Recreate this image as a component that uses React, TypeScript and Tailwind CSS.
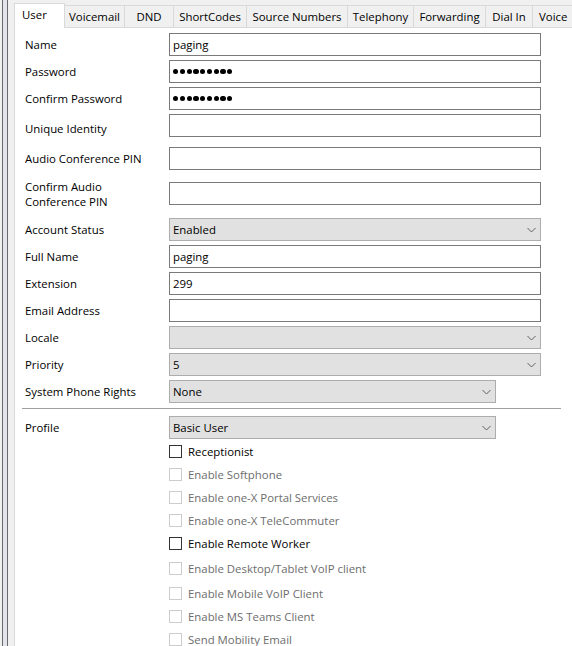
import React from "react";

const font = { fontFamily: '"Open Sans", "Liberation Sans", sans-serif' };

function Chevron() {
  return (
    <svg width="9" height="6" viewBox="0 0 9 6" className="shrink-0">
      <path d="M0.5 1 L4.5 5 L8.5 1" fill="none" stroke="#606060" strokeWidth="1" />
    </svg>
  );
}

function TextBox({ value, password }: { value?: string; password?: boolean }) {
  return (
    <div className="w-[372px] h-[23px] border border-[#7a7a7a] bg-white flex items-center pl-[3px] text-black">
      {password ? (
        <span className="flex gap-[1.6px]">
          {Array.from({ length: 9 }).map((_, i) => (
            <span key={i} className="block w-[5.2px] h-[5.2px] rounded-full bg-black" />
          ))}
        </span>
      ) : (
        <span className="leading-[15px]">{value}</span>
      )}
    </div>
  );
}

function Select({ value, narrow }: { value?: string; narrow?: boolean }) {
  return (
    <div
      className={`${narrow ? "w-[327px]" : "w-[372px]"} h-[23px] border border-[#adadad] bg-[#e1e1e1] flex items-center justify-between pl-[3px] pr-[4px] text-black`}
    >
      <span className="leading-[15px]">{value}</span>
      <Chevron />
    </div>
  );
}

function Row({
  label,
  children,
  mt,
  labelMt = "mt-[4px]",
}: {
  label: string;
  children: React.ReactNode;
  mt: string;
  labelMt?: string;
}) {
  return (
    <div className={`flex items-start ${mt}`}>
      <div className={`w-[144px] shrink-0 leading-[15px] ${labelMt}`}>{label}</div>
      {children}
    </div>
  );
}

function Check({ label, enabled, mt }: { label: string; enabled?: boolean; mt: string }) {
  return (
    <div className={`flex items-center h-[13px] ml-[144px] ${mt}`}>
      <div
        className={`w-[13px] h-[13px] shrink-0 bg-white border ${enabled ? "border-[#333333]" : "border-[#cccccc]"}`}
      />
      <span className={`ml-[6px] leading-[15px] whitespace-nowrap ${enabled ? "text-black" : "text-[#6d6d6d]"}`}>
        {label}
      </span>
    </div>
  );
}

const tabs = [
  { name: "Voicemail", w: "w-[60px]" },
  { name: "DND", w: "w-[49px]" },
  { name: "ShortCodes", w: "w-[73px]" },
  { name: "Source Numbers", w: "w-[101px]" },
  { name: "Telephony", w: "w-[66px]" },
  { name: "Forwarding", w: "w-[72px]" },
  { name: "Dial In", w: "w-[47px]" },
];

export default function App() {
  return (
    <div
      className="w-[572px] h-[646px] overflow-hidden bg-[#f0f0f0] flex text-[11.4px] text-black"
      style={font}
    >
      <div className="w-[2px] shrink-0 bg-[#f0f0f0]" />
      <div className="w-px shrink-0 bg-[#6b6b6b]" />
      <div className="w-[4px] shrink-0 bg-[#e3e3ee]" />
      <div className="w-px shrink-0 bg-[#6b6b6b]" />
      <div className="w-[6px] shrink-0 bg-[#f0f0f0]" />
      <div className="flex-1 flex flex-col min-w-0">
        {/* tab strip */}
        <div className="h-[27px] shrink-0 flex items-end relative z-10">
          <div className="w-[51px] h-[25px] -mb-px bg-white border-l border-t border-r border-[#d9d9d9] pl-[7px] pt-[3px] leading-[15px] shrink-0">
            User
          </div>
          {tabs.map((t) => (
            <div
              key={t.name}
              className={`${t.w} h-[22px] shrink-0 border-t border-r border-[#d9d9d9] bg-[#f0f0f0] flex items-center justify-center leading-[15px] whitespace-nowrap`}
            >
              {t.name}
            </div>
          ))}
          <div className="flex-1 h-[22px] border-t border-[#d9d9d9] bg-[#f0f0f0] flex items-center pl-[6px] leading-[15px] whitespace-nowrap">
            Voice
          </div>
        </div>
        {/* panel */}
        <div className="flex-1 bg-white border-l border-t border-[#d9d9d9] pl-[10px]">
          <Row label="Name" mt="mt-[5px]">
            <TextBox value="paging" />
          </Row>
          <Row label="Password" mt="mt-[4px]">
            <TextBox password />
          </Row>
          <Row label="Confirm Password" mt="mt-[4px]">
            <TextBox password />
          </Row>
          <Row label="Unique Identity" mt="mt-[4px]" labelMt="mt-[7px]">
            <TextBox />
          </Row>
          <Row label="Audio Conference PIN" mt="mt-[10px]" labelMt="mt-[4px]">
            <TextBox />
          </Row>
          <div className="flex items-start mt-[9px]">
            <div className="w-[144px] shrink-0 leading-[15px]">
              Confirm Audio
              <br />
              Conference PIN
            </div>
            <div className="mt-[3px]">
              <TextBox />
            </div>
          </div>
          <Row label="Account Status" mt="mt-[9px]">
            <Select value="Enabled" />
          </Row>
          <Row label="Full Name" mt="mt-[4px]">
            <TextBox value="paging" />
          </Row>
          <Row label="Extension" mt="mt-[4px]">
            <TextBox value="299" />
          </Row>
          <Row label="Email Address" mt="mt-[4px]">
            <TextBox />
          </Row>
          <Row label="Locale" mt="mt-[4px]">
            <Select />
          </Row>
          <Row label="Priority" mt="mt-[4px]">
            <Select value="5" />
          </Row>
          <Row label="System Phone Rights" mt="mt-[4px]">
            <Select value="None" narrow />
          </Row>
          <div className="ml-[-3px] w-[539px] h-px bg-[#a0a0a0] mt-[5px]" />
          <Row label="Profile" mt="mt-[7px]">
            <Select value="Basic User" narrow />
          </Row>
          <Check label="Receptionist" enabled mt="mt-[6px]" />
          <Check label="Enable Softphone" mt="mt-[10px]" />
          <Check label="Enable one-X Portal Services" mt="mt-[10px]" />
          <Check label="Enable one-X TeleCommuter" mt="mt-[10px]" />
          <Check label="Enable Remote Worker" enabled mt="mt-[10px]" />
          <Check label="Enable Desktop/Tablet VoIP client" mt="mt-[12px]" />
          <Check label="Enable Mobile VoIP Client" mt="mt-[12px]" />
          <Check label="Enable MS Teams Client" mt="mt-[10px]" />
          <Check label="Send Mobility Email" mt="mt-[10px]" />
        </div>
      </div>
    </div>
  );
}
